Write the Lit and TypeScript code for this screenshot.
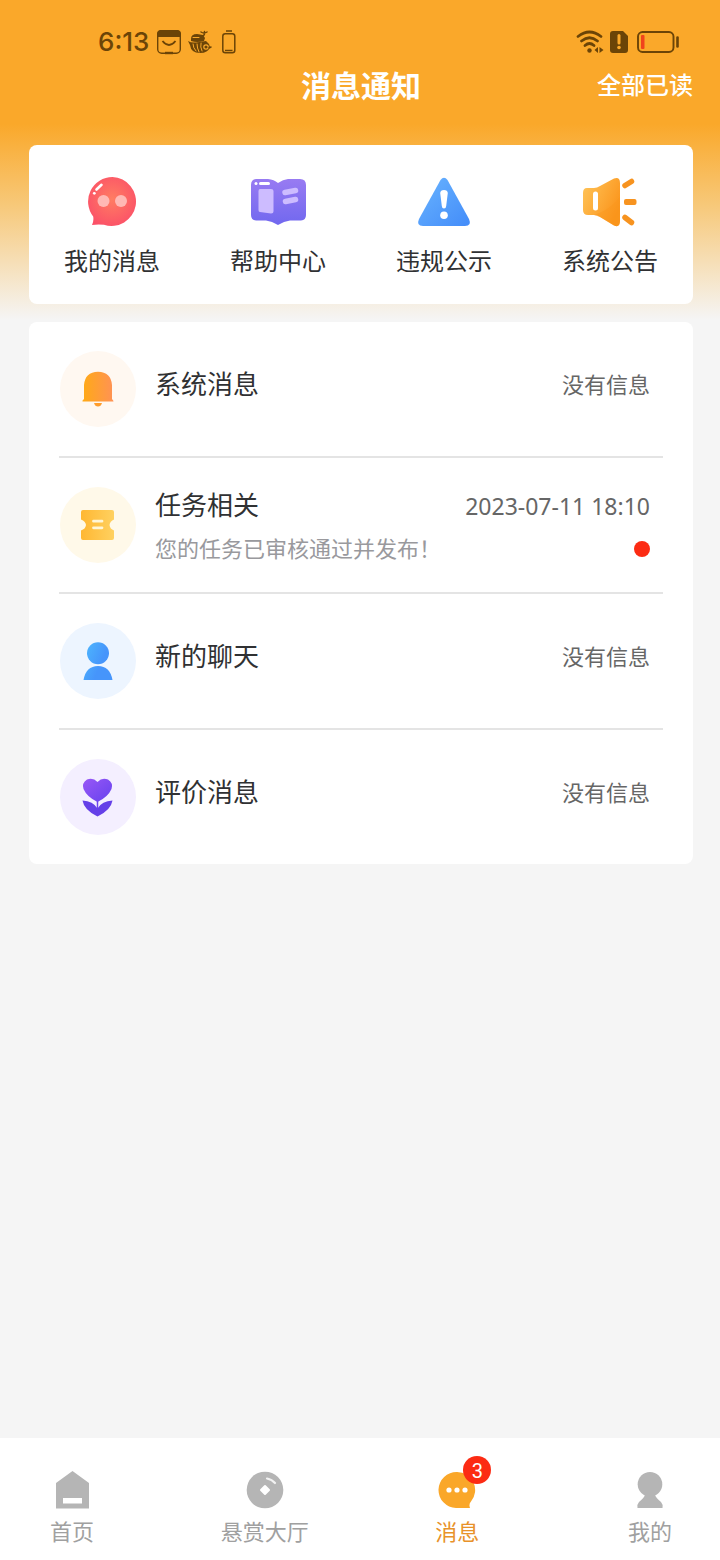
import { LitElement, html, css, svg } from "lit";
import { customElement } from "lit/decorators.js";

const quickIcons = {
  chat: svg`<defs><radialGradient id="qa" cx=".5" cy=".45" r=".6"><stop offset="0" stop-color="#ff7d62"/><stop offset="1" stop-color="#fb5068"/></radialGradient></defs>
    <path fill="url(#qa)" d="M28.500 3A24.500 24.500 0 1 1 20 50.800Q14 50 8 51Q10 47 9.200 42.500A24.500 24.500 0 0 1 28.500 3Z"/>
    <circle cx="19.500" cy="27" r="6" fill="#ffb8b4"/><circle cx="37" cy="27" r="6" fill="#ffb8b4"/>
    <path d="M12.500 15.500L17.500 10.800" stroke="#fff" stroke-width="2.600" stroke-linecap="round"/><circle cx="10.300" cy="19.300" r="1.400" fill="#fff"/>`,
  book: svg`<defs><linearGradient id="qb" x1="0" y1="0" x2="0" y2="1"><stop offset="0" stop-color="#987bf2"/><stop offset="1" stop-color="#7168ef"/></linearGradient></defs>
    <path fill="url(#qb)" d="M6 5H18Q24 5.500 28 9Q33 5.500 38 5H50Q56 5 56 11V41Q56 46 51 46.500H40Q34 47 28 51Q22 47 16 46.500H6Q1 46 1 41V11Q1 5.500 6 5Z"/>
    <path d="M10 15H21Q23.500 15 23.500 17V37Q23.500 39.500 21 39.500L10 38Q8.500 38 8.500 36V17Q8.500 15 10 15Z" fill="#cdbcff"/>
    <path d="M35 18.500L45.500 16.500M35.500 27.500L45.500 25.500" stroke="#cdbcff" stroke-width="5.500" stroke-linecap="round"/>
    <circle cx="6" cy="9.500" r="1.500" fill="#fff"/><path d="M10.500 9.500H18.500" stroke="#fff" stroke-width="3" stroke-linecap="round"/>`,
  warn: svg`<defs><linearGradient id="qc" x1="0" y1="0" x2="1" y2="1"><stop offset="0" stop-color="#69b4ff"/><stop offset="1" stop-color="#438cf9"/></linearGradient></defs>
    <path fill="url(#qc)" d="M24.500 6Q28 1.500 31.500 6L53 45Q56 52 49 52H7Q0 52 3 45Z"/>
    <path fill="#fff" d="M24.200 19Q24.500 16 28 16Q31.500 16 31.800 19L30.200 32Q30 34.500 28 34.500Q26 34.500 25.800 32Z"/><circle cx="28" cy="41.300" r="3.800" fill="#fff"/>`,
  horn: svg`<defs><linearGradient id="qd" x1="0" y1="0" x2="1" y2=".6"><stop offset="0" stop-color="#ffc65b"/><stop offset="1" stop-color="#fb941b"/></linearGradient></defs>
    <path fill="url(#qd)" d="M5 14H12Q15 14 18 12L32 4.500Q38 2.500 38 9V47Q38 54 32 51.500L18 43Q15 41 12 41H6Q1 41 1 36V19Q1 14 5 14Z"/>
    <path fill="#fa951c" opacity=".4" d="M38 23V47Q38 54 32 51.500L18 43L12 41Q28 36 38 23Z"/>
    <path d="M13.500 20V34" stroke="#fff" stroke-width="5" stroke-linecap="round"/>
    <path d="M43 11.500L49.500 7.500M43 43.500L49.500 48.500" stroke="#f7931f" stroke-width="5.500" stroke-linecap="round"/>
    <rect x="42" y="25" width="12.500" height="6" rx="2" fill="#f7931f"/>`,
};

const rowIcons = {
  bell: svg`<defs><linearGradient id="ra"><stop stop-color="#ffaa16"/><stop offset="1" stop-color="#ff9255"/></linearGradient></defs>
    <circle cx="39" cy="39" r="38" fill="#fff8f1"/>
    <path fill="url(#ra)" d="M25 35Q26 22 39 21.700Q52 22 53 35V49L54.500 51Q54.500 51.500 54 51.500H23.500V50.500L25 49Z"/>
    <path fill="#ff9d2d" d="M35 53H43Q42 56.500 39 56.500Q36 56.500 35 53Z"/>`,
  ticket: svg`<defs><linearGradient id="rb"><stop stop-color="#ffb732"/><stop offset="1" stop-color="#ffd160"/></linearGradient></defs>
    <circle cx="39" cy="39" r="38" fill="#fff9e9"/>
    <path fill="url(#rb)" d="M24 24H53Q55 24 55 26V33.500Q51 35 50.500 39Q51 43 55 44.500V52Q55 54 53 54H24Q22 54 22 52V44.500Q26.500 43 27 39Q26.500 35 22 33.500V26Q22 24 24 24Z"/>
    <path d="M34.500 35.200H43M34.500 41.800H43" stroke="#fff6d8" stroke-width="2.800" stroke-linecap="round"/>`,
  person: svg`<defs><linearGradient id="rc" gradientUnits="userSpaceOnUse" x1="25" y1="0" x2="54" y2="12"><stop stop-color="#50c4ff"/><stop offset="1" stop-color="#4695fb"/></linearGradient></defs>
    <circle cx="39" cy="39" r="38" fill="#edf5ff"/>
    <circle cx="39" cy="31.300" r="11" fill="url(#rc)"/><path fill="url(#rc)" d="M24.500 58Q27 44 39 44Q51 44 53.500 58Z"/>`,
  flower: svg`<defs><linearGradient id="rd" x1="0" y1="0" x2="1" y2="1"><stop stop-color="#9958f6"/><stop offset="1" stop-color="#6541ee"/></linearGradient></defs>
    <circle cx="39" cy="39" r="38" fill="#f4efff"/>
    <path fill="url(#rd)" d="M38.500 24Q43 19 49 21.500Q54.500 25 52.500 31Q49 39 38.500 44Q28 39 24.500 31Q22.500 25 28 21.500Q34 19 38.500 24Z"/>
    <path d="M38.500 43V52" stroke="#6e43ee" stroke-width="1.500"/>
    <path fill="#6540e8" d="M23.500 42.500Q34 43 38.500 50.500Q43 43 53.500 42.500Q52 52 38.500 58.500Q25 52 23.500 42.500Z"/>`,
};

const tabIcons = {
  home: svg`<path fill="#b5b5b5" fill-rule="evenodd" d="M20.500 1L37 13V38.500H4V13ZM11 28V33.500H30V28Z"/>`,
  coin: svg`<circle cx="20" cy="20" r="18.300" fill="#b5b5b5"/><path fill="#fff" stroke="#fff" stroke-width="2" stroke-linejoin="round" d="M20 16L24 20L20 24L16 20Z"/><path d="M22 8.500Q27 9.500 30 13" fill="none" stroke="#f2f2f2" stroke-width="2.200" stroke-linecap="round"/>`,
  message: svg`<path fill="#faa729" d="M20 2A18 18 0 0 1 34 31.500Q31.500 34 33 38H19A18 18 0 0 1 20 2Z"/><circle cx="12" cy="20" r="2.600" fill="#fff"/><circle cx="20" cy="20" r="2.600" fill="#fff"/><circle cx="28" cy="20" r="2.600" fill="#fff"/>`,
  mine: svg`<circle cx="20" cy="14.200" r="12.300" fill="#b5b5b5"/><path fill="#b5b5b5" d="M15 25H25Q26 28 31 32Q33 34 32.500 38H7.500Q7 34 9 32Q14 28 15 25Z"/>`,
};

const quick = [
  { icon: quickIcons.chat, label: "我的消息" },
  { icon: quickIcons.book, label: "帮助中心" },
  { icon: quickIcons.warn, label: "违规公示" },
  { icon: quickIcons.horn, label: "系统公告" },
];

const rows = [
  { icon: rowIcons.bell, title: "系统消息" },
  { icon: rowIcons.ticket, title: "任务相关", time: "2023-07-11 18:10", text: "您的任务已审核通过并发布！" },
  { icon: rowIcons.person, title: "新的聊天" },
  { icon: rowIcons.flower, title: "评价消息" },
];

const tabs = [
  { icon: tabIcons.home, label: "首页" },
  { icon: tabIcons.coin, label: "悬赏大厅" },
  { icon: tabIcons.message, label: "消息", badge: 3, active: true },
  { icon: tabIcons.mine, label: "我的" },
];

@customElement("app-root")
export class AppRoot extends LitElement {
  static styles = css`
    :host {
      display: flex;
      flex-direction: column;
      min-height: 100vh;
      font-family: Inter, "Noto Sans CJK SC", sans-serif;
      color: #303133;
      background: #f5f5f5 linear-gradient(#faa82a 0, #faa82a 124px, #f7c878 204px, #f5f5f5 320px) no-repeat 0 0 / 100% 320px;
    }
    * { box-sizing: border-box; }
    svg { display: block; flex: none; }
    a { color: inherit; text-decoration: none; }
    h1, h2, p, ul { margin: 0; padding: 0; }
    ul { list-style: none; }
    .status {
      display: flex;
      align-items: center;
      justify-content: space-between;
      height: 60px;
      padding: 24px 40px 0 98px;
      color: #6b4407;
    }
    .status-group { display: flex; align-items: center; gap: 6px; }
    .clock { margin-right: 2px; font-size: 26px; line-height: 36px; font-weight: 500; }
    .header {
      display: grid;
      grid-template-columns: 1fr auto 1fr;
      align-items: center;
      height: 52px;
      padding: 0 27px 0 29px;
      color: #fff;
    }
    .page-title { grid-column: 2; font-size: 30px; line-height: 40px; font-weight: 700; }
    .read-all {
      justify-self: end;
      padding: 0;
      border: 0;
      background: none;
      font: inherit;
      font-size: 24px;
      line-height: 36px;
      font-weight: 500;
      color: inherit;
    }
    .content {
      flex: 1;
      display: flex;
      flex-direction: column;
      gap: 18px;
      padding: 33px 27px 24px 29px;
    }
    .card { background: #fff; border-radius: 8px; }
    .quick { display: grid; grid-template-columns: repeat(4, 1fr); padding: 29px 0 24px; }
    .quick-link {
      display: flex;
      flex-direction: column;
      align-items: center;
      gap: 14px;
      font-size: 24px;
      line-height: 36px;
    }
    .list { padding: 0 30px; }
    .row { border-bottom: 2px solid #e4e4e4; }
    .row:last-child { border-bottom: 0; }
    .row-link { display: flex; align-items: center; gap: 18px; height: 134px; padding-right: 13px; }
    .row-body { flex: 1; display: flex; flex-direction: column; gap: 9px; padding-top: 3px; }
    .line { display: flex; align-items: center; justify-content: space-between; }
    .title { font-size: 26px; line-height: 36px; font-weight: 400; }
    .meta { font-size: 22px; line-height: 36px; color: #666; }
    .time { font-family: "Noto Sans", sans-serif; font-size: 23px; line-height: 36px; color: #666; }
    .text { font-size: 22px; line-height: 32px; color: #99999d; }
    .single { padding: 0 0 8px; }
    .dot { width: 16px; height: 16px; border-radius: 50%; background: #fc2b13; }
    .tabs {
      display: flex;
      justify-content: space-between;
      padding: 32px 26px 12px 28px;
      background: #fff;
    }
    .tab {
      position: relative;
      display: flex;
      flex-direction: column;
      align-items: center;
      gap: 6px;
      width: 88px;
      font-size: 22px;
      line-height: 32px;
      color: #a0a0a0;
      white-space: nowrap;
    }
    .active { color: #e8922a; }
    .badge {
      position: absolute;
      top: -14px;
      left: 50px;
      width: 28px;
      height: 28px;
      border-radius: 50%;
      background: #fc2b13;
      color: #fff;
      font-family: Roboto, sans-serif;
      font-size: 20px;
      line-height: 30px;
      text-align: center;
    }
  `;

  render() {
    return html`
      <div class="status">
        <div class="status-group">
          <span class="clock">6:13</span>
          <svg width="24" height="26" viewBox="0 0 24 26" fill="none" stroke="#6b4407">
            <rect x=".7" y="1.700" width="22.600" height="22.600" rx="4" stroke-width="1.400"/>
            <path fill="#6b4407" stroke="none" d="M0 8V5Q0 1 4 1H20Q24 1 24 5V8Z"/>
            <path d="M5.500 12Q12 20 18.500 12" stroke-width="1.800"/><path d="M8 24H16" stroke-width="2.400"/>
          </svg>
          <svg width="25" height="26" viewBox="0 0 25 26" fill="none" stroke="#6b4407" stroke-linecap="round">
            <path fill="#6b4407" stroke="none" d="M4 10Q4 5 10 5L16 6L18 9L17 12Q10 14 4 12Z"/>
            <path d="M15 7Q18 7 17.500 2.500M14 3Q17 5 20 3" stroke-width="1.500"/>
            <path fill="#6b4407" stroke="none" d="M1 12Q4 14 9 13.500L19 12Q22 14 23 18Q21 24 13 24Q4 24 3 16Z"/>
            <path d="M6 15Q6 19 9 22M10 15Q10 19 12 23M14 14Q13 18 15 22M6 8.500H12" stroke="#faa82a" stroke-width="1"/>
            <circle cx="19" cy="18" r="2.200" stroke="#faa82a" stroke-width="1.200"/><path d="M22 19L24 18" stroke-width="1.500"/>
          </svg>
          <svg width="20" height="26" viewBox="0 0 20 26" fill="none" stroke="#6b4407">
            <rect x="4.800" y="4.800" width="12" height="19" rx="2.500" stroke-width="1.500"/><path d="M8 2H14M7 21.500H14.500" stroke-width="1.600"/>
          </svg>
        </div>
        <div class="status-group">
          <svg width="28" height="26" viewBox="0 0 28 26" fill="none" stroke="#6b4407" stroke-linecap="round">
            <path d="M2 7.500Q13.500-1.500 25 7.500M5.500 12Q13.500 5.500 21.500 12M9 16.500Q13.500 12.500 18 16.500" stroke-width="2.700"/>
            <circle cx="13.500" cy="21.500" r="2.200" fill="#6b4407" stroke="none"/><path fill="#6b4407" stroke="none" d="M22 18V24L18.500 21ZM23.500 18V24L27.500 21Z"/>
          </svg>
          <svg width="18" height="26" viewBox="0 0 18 26"><path fill="#6b4407" d="M3 2H13L18 7V21Q18 24 15 24H3Q0 24 0 21V5Q0 2 3 2Z"/><path d="M9 6.500V14" stroke="#faa82a" stroke-width="3" stroke-linecap="round"/><circle cx="9" cy="18.500" r="1.800" fill="#faa82a"/></svg>
          <svg width="46" height="26" viewBox="0 0 46 26" fill="none"><rect x="4" y="3" width="35.500" height="20" rx="4.500" stroke="#6b4407" stroke-width="1.900"/><rect x="7" y="6" width="3.500" height="14" rx="1" fill="#f0431c"/><path d="M43.500 8.500V17.500" stroke="#6b4407" stroke-width="2.600" stroke-linecap="round"/></svg>
        </div>
      </div>
      <header class="header">
        <h1 class="page-title">消息通知</h1>
        <button class="read-all" type="button">全部已读</button>
      </header>
      <main class="content">
        <nav class="card quick">
          ${quick.map((q) => html`<a class="quick-link" href="#">
            <svg width="56" height="56" viewBox="0 0 56 56" fill="none">${q.icon}</svg><span>${q.label}</span>
          </a>`)}
        </nav>
        <ul class="card list">
          ${rows.map((r) => html`<li class="row"><a class="row-link" href="#">
            <svg width="78" height="78" viewBox="0 0 78 78">${r.icon}</svg>
            <div class="row-body ${r.text ? "" : "single"}">
              <div class="line">
                <h2 class="title">${r.title}</h2>
                ${r.time ? html`<time class="time">${r.time}</time>` : html`<span class="meta">没有信息</span>`}
              </div>
              ${r.text ? html`<div class="line"><p class="text">${r.text}</p><span class="dot"></span></div>` : ""}
            </div>
          </a></li>`)}
        </ul>
      </main>
      <nav class="tabs">
        ${tabs.map((t) => html`<a class="tab ${t.active ? "active" : ""}" href="#">
          <svg width="40" height="40" viewBox="0 0 40 40">${t.icon}</svg><span>${t.label}</span>
          ${t.badge ? html`<span class="badge">${t.badge}</span>` : ""}
        </a>`)}
      </nav>
    `;
  }
}
